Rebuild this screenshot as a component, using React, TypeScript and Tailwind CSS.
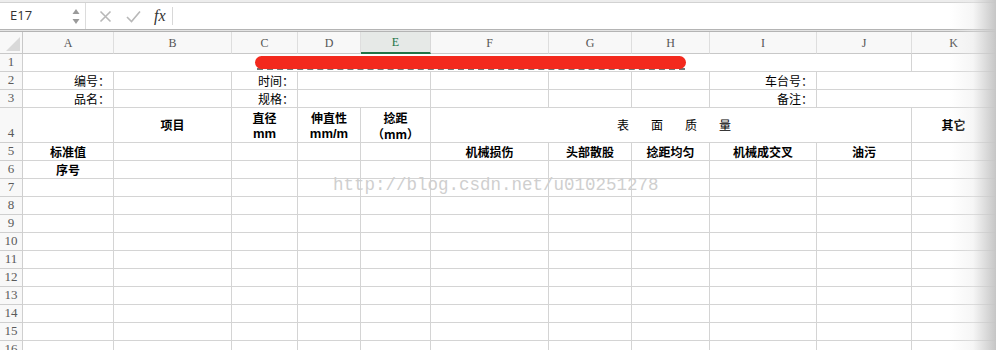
import React from "react";

const B = "border-r border-b border-[#d4d4d4]";
const CJK = "font-[family-name:'Noto_Sans_CJK_SC',sans-serif]";
const NUM =
  "flex items-end justify-center pb-[1px] border-r border-b border-[#cfcfcf] bg-[#f8f8f8] text-[13px] leading-[16px] text-[#5a5a5a] font-[family-name:'Liberation_Serif',serif]";

function RowNum({ n }: { n: number }) {
  return <div className={NUM}>{n}</div>;
}

function Empty() {
  return <div className={B} />;
}

function Label({ t }: { t: string }) {
  return (
    <div className={`${B} flex items-center justify-end pr-[3px] text-[12px] text-black ${CJK}`}>
      {t}
    </div>
  );
}

function Bold({ t }: { t: string }) {
  return (
    <div className={`${B} flex items-center justify-center text-[12px] font-bold text-black ${CJK}`}>
      {t}
    </div>
  );
}

function Two({ a, b, cjk }: { a: string; b: string; cjk?: boolean }) {
  return (
    <div
      className={`${B} flex flex-col items-center justify-center pt-[1px] text-[12px] leading-[16px] font-bold text-black ${CJK}`}
    >
      <span>{a}</span>
      {cjk ? (
        <span className="text-[12px]">{b}</span>
      ) : (
        <span className="font-[family-name:'Liberation_Sans',sans-serif] text-[13px]">{b}</span>
      )}
    </div>
  );
}

const cols = ["A", "B", "C", "D", "E", "F", "G", "H", "I", "J", "K"];

export default function App() {
  return (
    <div className="relative w-[996px] h-[350px] overflow-hidden bg-white">
      {/* top strip */}
      <div className="h-[3px] bg-[#ededed] border-b border-[#d2d2d2]" />
      {/* formula bar */}
      <div className="flex h-[26px] items-center bg-white">
        <div className="flex h-full w-[86px] items-center justify-between border-r border-[#dcdcdc] pl-[10px] pr-[5px]">
          <span className="text-[13px] text-[#333] font-[family-name:'Open_Sans',sans-serif]">E17</span>
          <svg width="8" height="20" viewBox="0 0 8 20">
            <path d="M4 3 L7.5 8 L0.5 8 Z" fill="#9a9a9a" />
            <path d="M4 18 L7.5 13 L0.5 13 Z" fill="#9a9a9a" />
          </svg>
        </div>
        <svg className="ml-[13px]" width="13" height="13" viewBox="0 0 13 13">
          <path d="M1.5 1.5 L11.5 11.5 M11.5 1.5 L1.5 11.5" stroke="#b8b8b8" strokeWidth="1.6" />
        </svg>
        <svg className="ml-[14px]" width="15" height="13" viewBox="0 0 15 13">
          <path d="M1 7 L5.5 11.5 L14 1.5" stroke="#b8b8b8" strokeWidth="1.6" fill="none" />
        </svg>
        <span className="ml-[13px] text-[16px] italic text-[#333] font-[family-name:'Liberation_Serif',serif]">
          fx
        </span>
        <div className="ml-[6px] h-[18px] border-l border-[#d8d8d8]" />
      </div>
      <div className="h-[3px] border-t border-b border-[#b4b4b4] bg-[#e4e4e4]" />

      {/* sheet grid */}
      <div className="grid grid-cols-[23px_91px_118px_66px_63px_70px_118px_83px_78px_107px_95px_84px] grid-rows-[22px_18px_18px_18px_35px_18px_18px_18px_18px_18px_18px_18px_18px_18px_18px_18px_18px]">
        {/* header row */}
        <div className="relative border-r border-b border-[#c8c8c8] bg-[#f8f8f8]">
          <svg className="absolute right-[2px] bottom-[2px]" width="14" height="14" viewBox="0 0 14 14">
            <path d="M14 0 L14 14 L0 14 Z" fill="#d9d9d9" />
          </svg>
        </div>
        {cols.map((c) =>
          c === "E" ? (
            <div
              key={c}
              className="flex items-center justify-center border-r border-b-2 border-r-[#d8d8d8] border-b-[#217346] bg-[#e6e9e7] text-[12px] text-[#217346] font-[family-name:'Liberation_Serif',serif]"
            >
              {c}
            </div>
          ) : (
            <div
              key={c}
              className="flex items-center justify-center border-r border-b border-r-[#dedede] border-b-[#c8c8c8] bg-[#f8f8f8] text-[12px] text-[#555] font-[family-name:'Liberation_Serif',serif]"
            >
              {c}
            </div>
          )
        )}

        {/* row 1 */}
        <RowNum n={1} />
        <div className={`${B} col-span-10`} />
        <Empty />

        {/* row 2 */}
        <RowNum n={2} />
        <Label t="编号：" />
        <Empty />
        <Label t="时间：" />
        <div className={`${B} col-span-2`} />
        <Empty />
        <Empty />
        <Empty />
        <Label t="车台号：" />
        <div className={`${B} col-span-2`} />

        {/* row 3 */}
        <RowNum n={3} />
        <Label t="品名：" />
        <Empty />
        <Label t="规格：" />
        <div className={`${B} col-span-2`} />
        <Empty />
        <Empty />
        <Empty />
        <Label t="备注：" />
        <div className={`${B} col-span-2`} />

        {/* row 4 */}
        <RowNum n={4} />
        <Empty />
        <div className={`${B} flex items-center justify-center pb-[1px] text-[12px] font-bold text-black ${CJK}`}>
          项目
        </div>
        <Two a="直径" b="mm" />
        <Two a="伸直性" b="mm/m" />
        <Two a="捻距" b="（mm）" cjk />
        <div
          className={`${B} col-span-5 flex items-center justify-center gap-[22px] pl-[6px] text-[12px] text-black ${CJK}`}
        >
          <span>表</span>
          <span>面</span>
          <span>质</span>
          <span>量</span>
        </div>
        <div className={`${B} flex items-center justify-center text-[12px] font-bold text-black ${CJK}`}>
          其它
        </div>

        {/* row 5 */}
        <RowNum n={5} />
        <Bold t="标准值" />
        <Empty />
        <Empty />
        <Empty />
        <Empty />
        <Bold t="机械损伤" />
        <Bold t="头部散股" />
        <Bold t="捻距均匀" />
        <Bold t="机械成交叉" />
        <Bold t="油污" />
        <Empty />

        {/* row 6 */}
        <RowNum n={6} />
        <Bold t="序号" />
        {Array.from({ length: 10 }).map((_, i) => (
          <Empty key={i} />
        ))}

        {/* rows 7-16 */}
        {Array.from({ length: 10 }).map((_, r) => (
          <React.Fragment key={r}>
            <RowNum n={r + 7} />
            {Array.from({ length: 11 }).map((_, i) => (
              <Empty key={i} />
            ))}
          </React.Fragment>
        ))}
      </div>

      {/* redaction over title */}
      <div className="pointer-events-none absolute left-[257px] top-[68px] h-[2px] w-[428px] border-b-2 border-dashed border-[#3a3a3a] opacity-70" />
      <div className="pointer-events-none absolute left-[255px] top-[56px] h-[13px] w-[431px] rounded-full bg-[#f3291d]" />

      {/* watermark */}
      <div className="pointer-events-none absolute left-[333px] top-[175px] text-[17.5px] leading-[20px] text-[#cfcfcf] font-[family-name:'Liberation_Mono',monospace]">
        http://blog.csdn.net/u010251278
      </div>

      {/* right edge fade */}
      <div className="pointer-events-none absolute right-0 top-0 h-full w-[46px] bg-linear-to-r from-white/0 via-[#e8e8e8]/40 to-[#c6c6c6]" />
    </div>
  );
}
